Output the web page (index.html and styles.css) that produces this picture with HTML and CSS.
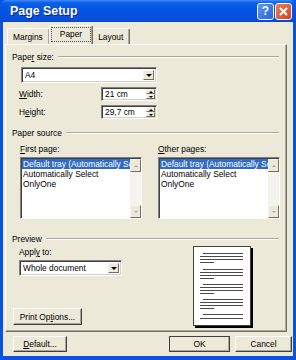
FILE: index.html
```html
<!DOCTYPE html>
<html lang="en">
<head>
  <meta charset="UTF-8" />
  <title>Page Setup</title>
  <link rel="stylesheet" href="styles.css">
</head>
<body>
  <div class="window">
    <div class="titlebar">
      <span class="title">Page Setup</span>
      <span class="tbtn help">?</span>
      <span class="tbtn close">
        <svg width="9" height="9" viewBox="0 0 9 9"><path d="M1 1 L8 8 M8 1 L1 8" stroke="#fff" stroke-width="2"/></svg>
      </span>
    </div>

    <div class="client">
      <div class="tabs">
        <div class="tab">Margins</div>
        <div class="tab active"><span class="focus">Paper</span></div>
        <div class="tab">Layout</div>
      </div>

      <div class="panel">
        <!-- Paper size -->
        <div class="group g1"><span>Pape<u>r</u> size:</span></div>
        <div class="combo paper">
          <span class="val">A4</span>
          <span class="drop"><i></i></span>
        </div>
        <div class="row r1">
          <span class="lbl"><u>W</u>idth:</span>
          <div class="spin"><span class="val">21 cm</span><span class="arrows"><b class="up"></b><b class="down"></b></span></div>
        </div>
        <div class="row r2">
          <span class="lbl">H<u>e</u>ight:</span>
          <div class="spin"><span class="val">29,7 cm</span><span class="arrows"><b class="up"></b><b class="down"></b></span></div>
        </div>

        <!-- Paper source -->
        <div class="group g2"><span>Paper source</span></div>
        <div class="sources">
          <div class="source">
            <div class="lbl"><u>F</u>irst page:</div>
            <div class="listbox">
              <ul>
                <li class="sel">Default tray (Automatically Select)</li>
                <li>Automatically Select</li>
                <li>OnlyOne</li>
              </ul>
              <div class="scroll"><b class="up"></b><b class="down"></b></div>
            </div>
          </div>
          <div class="source">
            <div class="lbl"><u>O</u>ther pages:</div>
            <div class="listbox">
              <ul>
                <li class="sel">Default tray (Automatically Select)</li>
                <li>Automatically Select</li>
                <li>OnlyOne</li>
              </ul>
              <div class="scroll"><b class="up"></b><b class="down"></b></div>
            </div>
          </div>
        </div>

        <!-- Preview -->
        <div class="group g3"><span>Preview</span></div>
        <div class="preview">
          <div class="apply">
            <div class="lbl">Appl<u>y</u> to:</div>
            <div class="combo whole">
              <span class="val">Whole document</span>
              <span class="drop"><i></i></span>
            </div>
            <button class="btn opts">Print Op<u>t</u>ions...</button>
          </div>
          <div class="page">
            <svg width="58" height="80" viewBox="0 0 58 80">
              <g stroke="#4a4a4a" stroke-width="1">
                <path d="M10 7.5H50 M7 10.5H50 M7 13.5H50 M7 16.5H21"/>
                <path d="M10 23.5H50 M7 26.5H50 M7 29.5H50 M7 32.5H21"/>
                <path d="M10 38.5H50 M7 41.5H50 M7 44.5H50 M7 47.5H21"/>
                <path d="M10 53.5H50 M7 56.5H50 M7 59.5H50 M7 62.5H21"/>
                <path d="M10 68.5H50 M7 72.5H50"/>
              </g>
            </svg>
          </div>
        </div>
      </div>

      <div class="buttons">
        <button class="btn def"><u>D</u>efault...</button>
        <span class="spacer"></span>
        <button class="btn ok">OK</button>
        <button class="btn cancel">Cancel</button>
      </div>
    </div>
  </div>
</body>
</html>
```

FILE: styles.css
```css
body {
  margin: 0;
  font-family: "Liberation Sans", Arial, sans-serif;
  font-size: 8.4px;
  color: #000;
}
.window {
  width: 296px;
  height: 360px;
  box-sizing: border-box;
  background: #0a53e0;
  padding: 0 3px 4px 3px;
  display: flex;
  flex-direction: column;
}
.titlebar {
  height: 22px;
  margin: 0 -3px;
  padding: 0 3px 0 10px;
  display: flex;
  align-items: center;
  background: linear-gradient(#3d8cf5 0, #0a5ce8 3px, #0453e2 12px, #0a4fd8 20px, #0843c8 22px);
  border-radius: 6px 6px 0 0;
}
.title {
  flex: 1;
  color: #fff;
  font-weight: bold;
  font-size: 12.4px;
  text-shadow: 1px 1px 0 #0a2a8a;
}
.tbtn {
  width: 17px;
  height: 17px;
  box-sizing: border-box;
  border: 1px solid #fff;
  border-radius: 3px;
  display: flex;
  align-items: center;
  justify-content: center;
  margin-left: 1px;
  color: #fff;
  font-weight: bold;
  font-size: 12px;
}
.help {
  background: linear-gradient(135deg, #5e95f5, #2663e0);
}
.close {
  background: linear-gradient(135deg, #e8805f, #d2441e);
  margin-right: 1px;
}
.client {
  flex: 1;
  background: #ece9d8;
  padding: 4px 0 0 2px;
  display: flex;
  flex-direction: column;
}

/* tabs */
.tabs {
  display: flex;
  height: 18px;
  align-items: flex-end;
  padding-left: 2px;
}
.tab {
  height: 16px;
  box-sizing: border-box;
  padding: 3px 6px 0 5px;
  border-top: 1px solid #fff;
  border-left: 1px solid #fff;
  border-right: 1px solid #716f64;
  box-shadow: inset -1px 0 0 #aca899;
  border-radius: 2px 2px 0 0;
}
.tab.active {
  height: 19px;
  padding: 2px 2px 0 2px;
  margin: 0 -1px;
  position: relative;
  z-index: 1;
  background: #ece9d8;
}
.tab.active .focus {
  display: block;
  padding: 1px 8px 2px 8px;
  outline: 1px dotted #555;
}
.panel {
  width: 282px;
  height: 288px;
  box-sizing: border-box;
  border-top: 1px solid #fff;
  border-left: 1px solid #fff;
  border-right: 1px solid #716f64;
  border-bottom: 1px solid #716f64;
  box-shadow: inset -1px -1px 0 #aca899;
  padding: 0 7px 0 6px;
  display: flex;
  flex-direction: column;
}

/* group headers */
.group {
  display: flex;
  align-items: center;
  height: 11px;
}
.group::after {
  content: "";
  flex: 1;
  height: 0;
  border-top: 1px solid #aca899;
  border-bottom: 1px solid #fff;
  margin-left: 4px;
}
.g1 { margin-top: 6px; }
.g2 { margin-top: 8px; }
.g3 { margin-top: 14px; }

/* inputs */
.combo, .spin {
  box-sizing: border-box;
  background: #fff;
  border: 1px solid;
  border-color: #808080 #fff #fff #808080;
  box-shadow: inset 1px 1px 0 #404040, inset -1px -1px 0 #d4d0c8;
  display: flex;
  align-items: center;
  padding: 2px 2px 2px 3px;
}
.combo .val, .spin .val {
  flex: 1;
  white-space: nowrap;
}
.combo.paper {
  width: 136px;
  height: 16px;
  margin: 5px 0 0 9px;
}
.drop {
  width: 11px;
  height: 100%;
  box-sizing: border-box;
  background: #ece9d8;
  border: 1px solid;
  border-color: #f5f4ef #716f64 #716f64 #f5f4ef;
  display: flex;
  align-items: center;
  justify-content: center;
}
.drop i {
  width: 0;
  height: 0;
  border-left: 3px solid transparent;
  border-right: 3px solid transparent;
  border-top: 3px solid #000;
}
.row {
  display: flex;
  align-items: center;
  height: 14px;
  margin-left: 7px;
}
.r1 { margin-top: 4px; }
.r2 { margin-top: 4px; }
.row .lbl {
  width: 82px;
}
.spin {
  width: 56px;
  height: 14px;
  padding: 1px 1px 1px 3px;
}
.arrows {
  display: flex;
  flex-direction: column;
  width: 9px;
  height: 100%;
}
.arrows b, .scroll b {
  flex: 1;
  background: #ece9d8;
  border: 1px solid;
  border-color: #f5f4ef #716f64 #716f64 #f5f4ef;
  display: flex;
  align-items: center;
  justify-content: center;
}
.arrows b::after, .scroll b::after {
  content: "";
  border-left: 2px solid transparent;
  border-right: 2px solid transparent;
}
.arrows .up::after { border-bottom: 2px solid #000; }
.arrows .down::after { border-top: 2px solid #000; }

/* paper source */
.sources {
  display: flex;
  gap: 16px;
  margin: 6px 0 0 8px;
}
.source .lbl {
  height: 10px;
  line-height: 10px;
}
.listbox {
  width: 122px;
  height: 62px;
  margin-top: 3px;
  box-sizing: border-box;
  background: #fff;
  border: 1px solid;
  border-color: #808080 #fff #fff #808080;
  box-shadow: inset 1px 1px 0 #404040;
  display: flex;
  padding: 1px 0 0 1px;
  overflow: hidden;
}
.listbox ul {
  flex: 1;
  list-style: none;
  margin: 0;
  padding: 0;
  overflow: hidden;
}
.listbox li {
  height: 10px;
  line-height: 10px;
  padding-left: 1px;
  white-space: nowrap;
  overflow: hidden;
}
.listbox li.sel {
  background: #316ac5;
  color: #fff;
}
.scroll {
  width: 11px;
  display: flex;
  flex-direction: column;
  justify-content: space-between;
  background: #f4f3ee;
}
.scroll b {
  flex: none;
  height: 11px;
}
.scroll .up::after { border-bottom: 2px solid #aca899; }
.scroll .down::after { border-top: 2px solid #aca899; }

/* preview */
.preview {
  display: flex;
  height: 84px;
}
.apply {
  width: 174px;
  padding-left: 7px;
  display: flex;
  flex-direction: column;
  align-items: flex-start;
}
.apply .lbl {
  margin-top: 3px;
  height: 10px;
  line-height: 10px;
}
.combo.whole {
  width: 103px;
  height: 16px;
  margin-top: 3px;
}
.btn {
  font: inherit;
  height: 17px;
  box-sizing: border-box;
  padding: 0;
  background: #ece9d8;
  border: 1px solid;
  border-color: #fff #404040 #404040 #fff;
  box-shadow: inset -1px -1px 0 #aca899;
  color: #000;
}
.btn.opts {
  width: 69px;
  margin: 32px 0 0 -6px;
}
.page {
  margin-top: 2px;
  width: 58px;
  height: 80px;
  background: #fff;
  border: 1px solid #404040;
  box-sizing: border-box;
  box-shadow: 2px 2px 0 #000;
}
.page svg {
  display: block;
  margin: -1px;
}

/* dialog buttons */
.buttons {
  display: flex;
  margin-top: 4px;
  padding-left: 8px;
}
.buttons .btn {
  height: 16px;
}
.spacer { flex: 1; }
.btn.def { width: 54px; }
.btn.ok {
  width: 61px;
  border-color: #fff #000 #000 #fff;
  outline: 1px solid #404040;
  outline-offset: -1px;
}
.btn.cancel {
  width: 57px;
  margin: 0 1px 0 5px;
}
```
